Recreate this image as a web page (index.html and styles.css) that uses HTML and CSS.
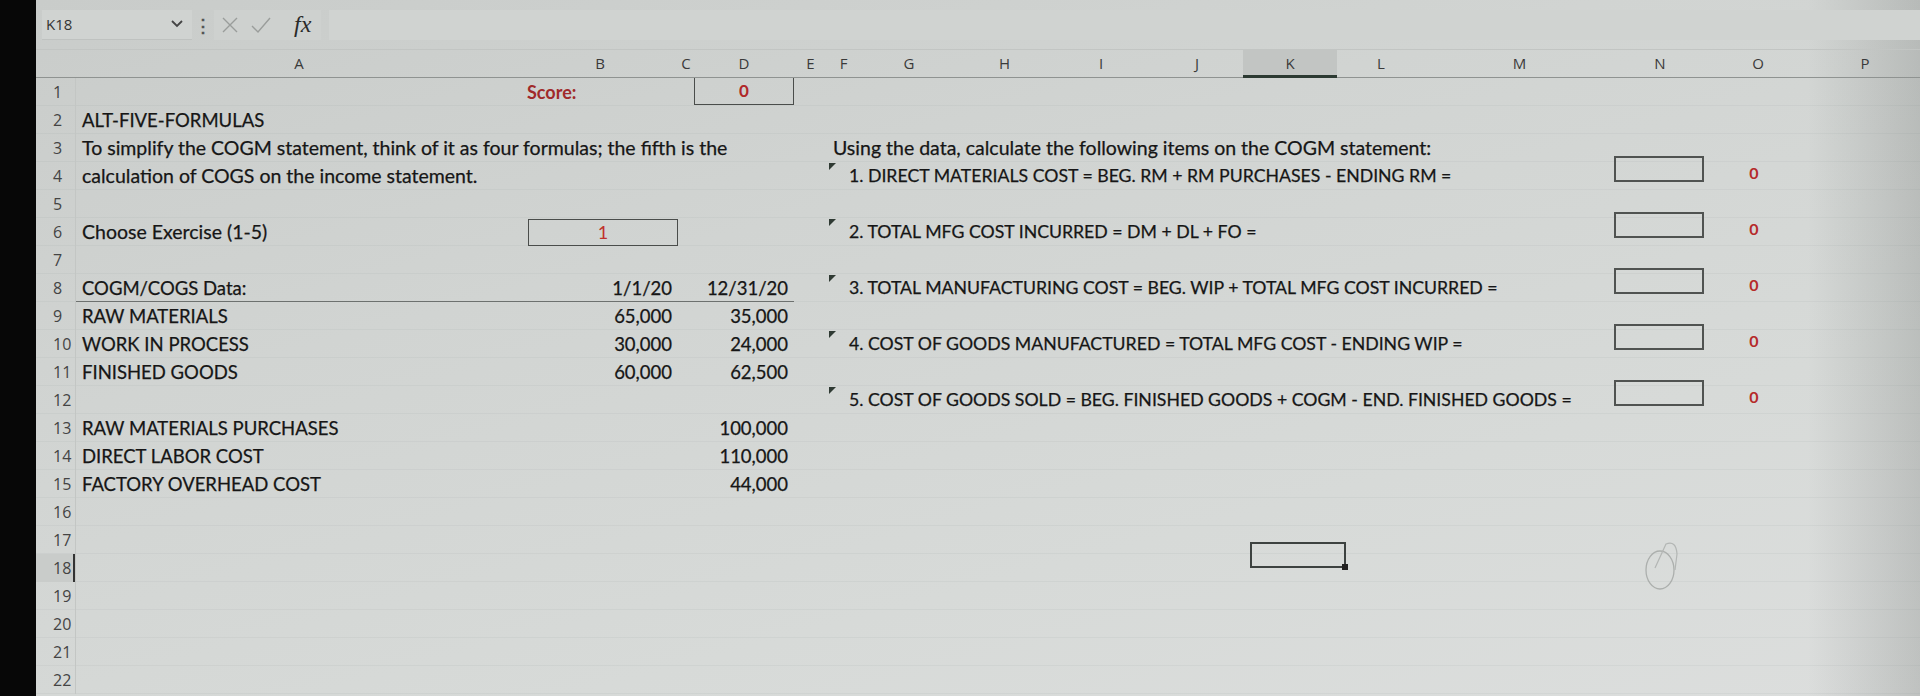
FILE: index.html
```html
<!DOCTYPE html>
<html>
<head>
<meta charset="utf-8">
<title>COGM</title>
<link rel="stylesheet" href="styles.css">
</head>
<body>
<div class="screen">
  <div class="bezel"></div>
  <div class="app">
    <div class="fbar">
      <div class="namebox"><span class="nb-text">K18</span>
        <svg class="chev" width="14" height="10" viewBox="0 0 14 10"><path d="M2 2 L7 7 L12 2" fill="none" stroke="#444" stroke-width="1.8"/></svg>
      </div>
      <div class="dots">⋮</div>
      <div class="fbtns">
        <svg width="20" height="20" viewBox="0 0 20 20"><path d="M3 3 L17 17 M17 3 L3 17" stroke="#9a9d9b" stroke-width="1.4" fill="none"/></svg>
        <svg width="22" height="20" viewBox="0 0 22 20"><path d="M2 11 L8 17 L20 3" stroke="#9a9d9b" stroke-width="1.4" fill="none"/></svg>
        <span class="fx">fx</span>
      </div>
      <div class="finput"></div>
    </div>

    <div class="sheet">
      <div class="row hdr">
        <div class="corner"></div>
        <div class="ch">A</div><div class="ch">B</div><div class="ch">C</div><div class="ch">D</div>
        <div class="ch">E</div><div class="ch">F</div><div class="ch">G</div><div class="ch">H</div>
        <div class="ch">I</div><div class="ch">J</div><div class="ch sel">K</div><div class="ch">L</div>
        <div class="ch">M</div><div class="ch">N</div><div class="ch">O</div><div class="ch">P</div>
      </div>

      <div class="row"><div class="rh">1</div><div class="c cB score">Score:</div><div class="c cD dbox">0</div></div>
      <div class="row"><div class="rh">2</div><div class="c cA caps">ALT-FIVE-FORMULAS</div></div>
      <div class="row"><div class="rh">3</div><div class="c cA">To simplify the COGM statement, think of it as four formulas; the fifth is the</div><div class="c cF">Using the data, calculate the following items on the COGM statement:</div></div>
      <div class="row"><div class="rh">4</div><div class="c cA">calculation of COGS on the income statement.</div><div class="c cF item"><span class="tri"></span>1. DIRECT MATERIALS COST = BEG. RM + RM PURCHASES - ENDING RM =</div><div class="c cN"><div class="abox"></div></div><div class="c cO zero">0</div></div>
      <div class="row"><div class="rh">5</div></div>
      <div class="row"><div class="rh">6</div><div class="c cA">Choose Exercise (1-5)</div><div class="c cB exbox">1</div><div class="c cF item"><span class="tri"></span>2. TOTAL MFG COST INCURRED = DM + DL + FO =</div><div class="c cN"><div class="abox"></div></div><div class="c cO zero">0</div></div>
      <div class="row"><div class="rh">7</div></div>
      <div class="row r8"><div class="rh">8</div><div class="c cA ul caps">COGM/COGS Data:</div><div class="c cB num ul">1/1/20</div><div class="c cC ul"></div><div class="c cD num ul">12/31/20</div><div class="c cF item"><span class="tri"></span>3. TOTAL MANUFACTURING COST = BEG. WIP + TOTAL MFG COST INCURRED =</div><div class="c cN"><div class="abox"></div></div><div class="c cO zero">0</div></div>
      <div class="row"><div class="rh">9</div><div class="c cA caps">RAW MATERIALS</div><div class="c cB num">65,000</div><div class="c cD num">35,000</div></div>
      <div class="row"><div class="rh">10</div><div class="c cA caps">WORK IN PROCESS</div><div class="c cB num">30,000</div><div class="c cD num">24,000</div><div class="c cF item"><span class="tri"></span>4. COST OF GOODS MANUFACTURED = TOTAL MFG COST - ENDING WIP =</div><div class="c cN"><div class="abox"></div></div><div class="c cO zero">0</div></div>
      <div class="row"><div class="rh">11</div><div class="c cA caps">FINISHED GOODS</div><div class="c cB num">60,000</div><div class="c cD num">62,500</div></div>
      <div class="row"><div class="rh">12</div><div class="c cF item"><span class="tri"></span>5. COST OF GOODS SOLD = BEG. FINISHED GOODS + COGM - END. FINISHED GOODS =</div><div class="c cN"><div class="abox"></div></div><div class="c cO zero">0</div></div>
      <div class="row"><div class="rh">13</div><div class="c cA caps">RAW MATERIALS PURCHASES</div><div class="c cD num">100,000</div></div>
      <div class="row"><div class="rh">14</div><div class="c cA caps">DIRECT LABOR COST</div><div class="c cD num">110,000</div></div>
      <div class="row"><div class="rh">15</div><div class="c cA caps">FACTORY OVERHEAD COST</div><div class="c cD num">44,000</div></div>
      <div class="row"><div class="rh">16</div></div>
      <div class="row"><div class="rh">17</div></div>
      <div class="row"><div class="rh rsel">18</div><div class="c cK selcell"><span class="handle"></span></div><div class="c cN doodle"><svg width="60" height="60" viewBox="0 0 60 60"><ellipse cx="22" cy="34" rx="14" ry="19" fill="none" stroke="#acafad" stroke-width="1.3"/><path d="M17 32 L28 8 Q38 4 39 18 L37 34" fill="none" stroke="#b3b6b4" stroke-width="1.2"/></svg></div></div>
      <div class="row"><div class="rh">19</div></div>
      <div class="row"><div class="rh">20</div></div>
      <div class="row"><div class="rh">21</div></div>
      <div class="row"><div class="rh">22</div></div>
    </div>
  </div>
</div>
</body>
</html>
```

FILE: styles.css
```css
html, body {
  margin: 0;
  padding: 0;
  width: 1920px;
  height: 696px;
  overflow: hidden;
  background: #d3d6d4;
}

.screen {
  display: flex;
  width: 1920px;
  height: 696px;
}

.bezel {
  width: 36px;
  flex: 0 0 36px;
  background: #070707;
}

.app {
  flex: 1;
  display: flex;
  flex-direction: column;
  background:
    linear-gradient(90deg, rgba(0,0,0,0) 0%, rgba(0,0,0,0) 94%, rgba(40,45,42,0.16) 100%),
    linear-gradient(165deg, #c9ccca 0%, #d1d4d2 35%, #d7dad8 70%, #dcdedd 100%);
}

/* formula bar */
.fbar {
  height: 50px;
  flex: 0 0 50px;
  display: flex;
  align-items: center;
  border-bottom: 1px solid #c2c5c3;
  box-sizing: border-box;
  font-family: "Open Sans", "Noto Sans", sans-serif;
}

.namebox {
  width: 150px;
  height: 30px;
  margin-left: 6px;
  display: flex;
  align-items: center;
  justify-content: space-between;
  background: #d0d3d1;
  border-bottom: 1px solid #bfc2c0;
  padding: 0 8px 0 4px;
  box-sizing: border-box;
}

.nb-text {
  font-size: 15px;
  color: #333;
}

.dots {
  width: 22px;
  text-align: center;
  font-size: 18px;
  color: #555;
  font-weight: bold;
}

.fbtns {
  display: flex;
  align-items: center;
  gap: 10px;
  height: 30px;
  padding: 0 10px 0 6px;
  background: #ced1cf;
}

.fx {
  font-family: "Liberation Serif", serif;
  font-style: italic;
  font-size: 24px;
  color: #2a2a2a;
  margin-left: 12px;
}

.finput {
  flex: 1;
  height: 30px;
  margin-left: 8px;
  background: #d0d3d1;
}

/* sheet */
.sheet {
  --cols: 40px 446px 156px 16px 100px 33px 33px 98px 93px 100px 92px 94px 88px 189px 92px 104px 110px;
  display: flex;
  flex-direction: column;
  font-family: "Lato", "Liberation Sans", sans-serif;
  color: #161616;
}

.row {
  display: grid;
  grid-template-columns: var(--cols);
  grid-template-rows: 28px;
  height: 28px;
  flex: 0 0 28px;
  box-shadow: inset 0 -1px 0 rgba(120,125,122,0.07);
}

.row.hdr {
  border-bottom: 1px solid #8f9391;
  box-shadow: none;
  box-sizing: border-box;
}

.ch {
  font-family: "Open Sans", "Noto Sans", sans-serif;
  font-size: 15px;
  color: #3a3a3a;
  text-align: center;
  line-height: 27px;
  white-space: nowrap;
}

.ch.sel {
  background: #c2c5c3;
  box-shadow: inset 0 -3px 0 #2c3a32;
}

.rh {
  grid-column: 1;
  font-family: "Open Sans", "Noto Sans", sans-serif;
  font-size: 16px;
  color: #444;
  line-height: 28px;
  padding-left: 17px;
  border-right: 1px solid #c3c6c4;
}

.rh.rsel {
  background: #c9ccca;
  box-shadow: inset -2px 0 0 #333;
}

.c {
  font-size: 19.5px;
  line-height: 28px;
  white-space: nowrap;
  overflow: visible;
  padding: 0 6px;
  position: relative;
  -webkit-text-stroke: 0.25px #161616;
}

.c.caps { font-size: 18.5px; }

.cA { grid-column: 2; }
.cB { grid-column: 3; }
.cC { grid-column: 4; }
.cD { grid-column: 5; }
.cF { grid-column: 7; }
.cK { grid-column: 12; }
.cN { grid-column: 15; }
.cO { grid-column: 16; }

.num {
  text-align: right;
  font-size: 18.5px;
}

.ul {
  box-shadow: inset 0 -1px 0 #6d716f;
}

.score {
  color: #a02a2a;
  font-weight: bold;
  font-size: 18px;
  padding-left: 5px;
  -webkit-text-stroke: 0;
}

.dbox {
  color: #b02828;
  font-weight: bold;
  font-size: 17px;
  text-align: center;
  border: 1.5px solid #4a4d4b;
  border-top: none;
  height: 26px;
  line-height: 26px;
  padding: 0;
  -webkit-text-stroke: 0;
}

.exbox {
  color: #c0302c;
  text-align: center;
  font-size: 18px;
  border: 1.5px solid #4a4d4b;
  height: 25px;
  line-height: 25px;
  margin: 1px 0 0 6px;
  padding: 0;
  -webkit-text-stroke: 0;
}

.item {
  padding-left: 22px;
  font-size: 17.7px;
}

.tri {
  position: absolute;
  left: 2px;
  top: 1px;
  width: 0;
  height: 0;
  border-top: 7px solid #2f3a33;
  border-right: 7px solid transparent;
}

.abox {
  width: 90px;
  height: 26px;
  border: 2px solid #505351;
  box-sizing: border-box;
  margin: -6px 0 0 -6px;
}

.zero {
  color: #b52a2a;
  font-weight: bold;
  font-size: 16px;
  text-align: center;
  line-height: 22px;
  padding-right: 14px;
  -webkit-text-stroke: 0;
}

.selcell {
  border: 2px solid #3d4240;
  width: 96px;
  height: 26px;
  box-sizing: border-box;
  margin: -12px 0 0 7px;
  padding: 0;
}

.handle {
  position: absolute;
  right: -4px;
  bottom: -4px;
  width: 6px;
  height: 6px;
  background: #222;
}

.doodle {
  padding: 0;
  height: 28px;
}

.doodle svg {
  display: block;
  margin: -18px 0 0 24px;
}
```
